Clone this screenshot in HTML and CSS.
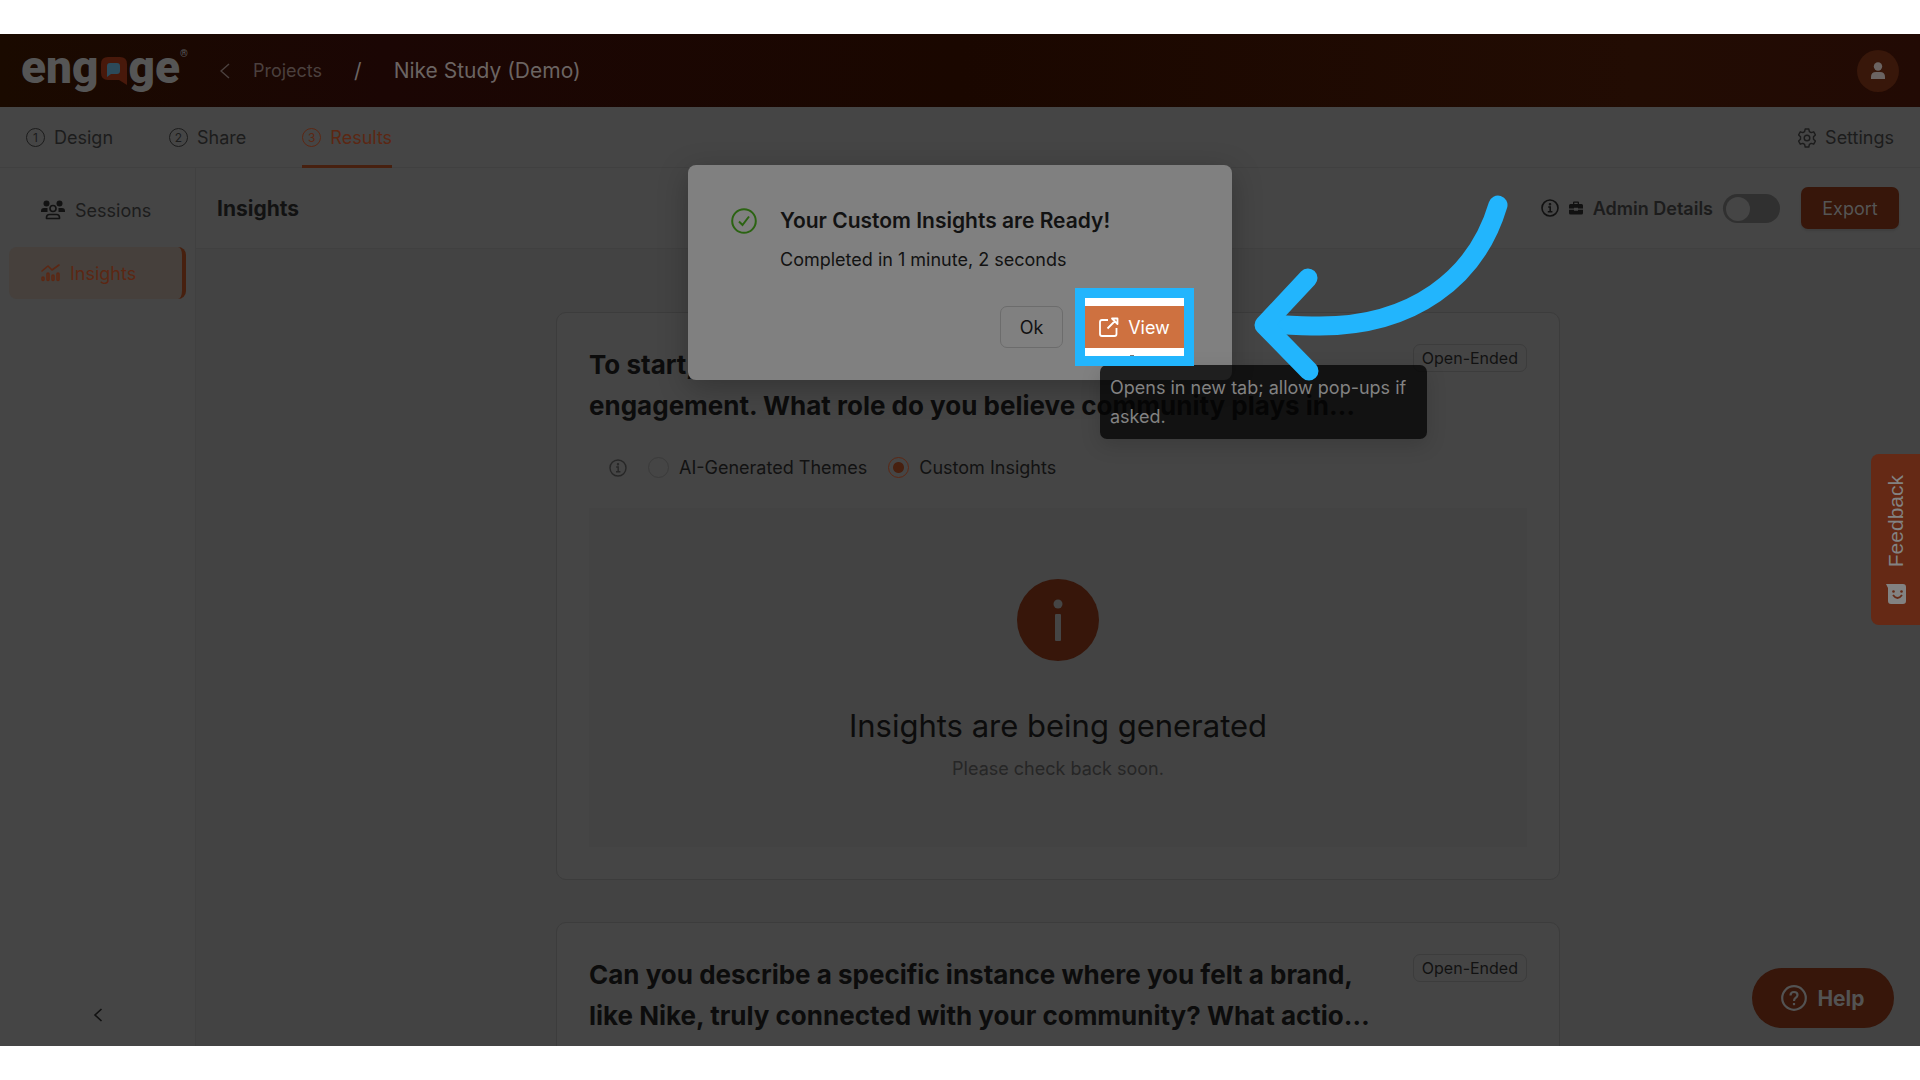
FILE: index.html
```html
<!DOCTYPE html>
<html lang="en">
<head>
  <meta charset="UTF-8">
  <meta name="viewport" content="width=device-width, initial-scale=1">
  <title>Nike Study (Demo) - Insights</title>
  <link rel="stylesheet" href="styles.css">
</head>
<body>

<div class="app">
  <header class="topbar">
    <a href="#" class="logo" aria-label="engage">
      <span>eng</span>
      <svg width="26" height="28" viewBox="0 0 26 28">
        <path d="M7 0H19Q26 0 26 7V28L18 23H7Q0 23 0 16V7Q0 0 7 0Z" fill="#48190b"/>
        <path d="M9 6H16Q19 6 19 9V14Q19 17 16 17H10L6 20V9Q6 6 9 6Z" fill="#2c4a5a"/>
      </svg>
      <span>ge</span>
      <sup>®</sup>
    </a>
    <nav class="breadcrumb">
      <a href="#" class="back" aria-label="Back">
        <svg width="10" height="16" viewBox="0 0 10 16"><path d="M9 1L1 8L9 15" fill="none" stroke="#4b403e" stroke-width="1.5"/></svg>
      </a>
      <a href="#">Projects</a>
      <span class="slash">/</span>
      <span class="current">Nike Study (Demo)</span>
    </nav>
    <button class="avatar" aria-label="Account">
      <svg width="16" height="18" viewBox="0 0 16 18"><circle cx="8" cy="4.5" r="4.2"/><path d="M1 17V15Q1 10 6 10H10Q15 10 15 15V17Z"/></svg>
    </button>
  </header>

  <nav class="tabs">
    <a href="#" class="tab"><span class="num">1</span>Design</a>
    <a href="#" class="tab"><span class="num">2</span>Share</a>
    <a href="#" class="tab active"><span class="num">3</span>Results</a>
    <a href="#" class="tab settings">
      <svg width="18" height="20" viewBox="0 0 18 20" fill="none" stroke="#1c1c1c" stroke-width="1.4" stroke-linejoin="round">
        <path d="M7.2 1H10.8L11.4 3.6L13.2 4.6L15.7 3.8L17.4 6.9L15.5 8.8V11.2L17.4 13.1L15.7 16.2L13.2 15.4L11.4 16.4L10.8 19H7.2L6.6 16.4L4.8 15.4L2.3 16.2L.6 13.1L2.5 11.2V8.8L.6 6.9L2.3 3.8L4.8 4.6L6.6 3.6Z"/>
        <circle cx="9" cy="10" r="2.8"/>
      </svg>
      Settings
    </a>
  </nav>

  <div class="body">
    <aside class="sidebar">
      <a href="#" class="side-link">
        <svg width="24" height="20" viewBox="0 0 24 20" fill="#121212">
          <circle cx="5.5" cy="3.5" r="3"/><circle cx="18.5" cy="3.5" r="3"/>
          <path d="M0 12V11Q0 8 3 8H6.500V12ZM24 12V11Q24 8 21 8H17.500V12Z"/>
          <circle cx="12" cy="8.500" r="3" fill="none" stroke="#121212" stroke-width="1.6"/>
          <path d="M5.500 18.500V17.500Q5.500 14.500 8.500 14.500H15.500Q18.500 14.500 18.500 17.500V18.500Z" fill="none" stroke="#121212" stroke-width="1.6" stroke-linejoin="round"/>
        </svg>
        Sessions
      </a>
      <a href="#" class="side-link active">
        <svg width="19" height="18" viewBox="0 0 19 18" fill="none" stroke="#5c2713" stroke-width="1.6" stroke-linecap="round" stroke-linejoin="round">
          <path d="M1 7L7 2L11 6L18 1"/>
          <rect x="1" y="13" width="2" height="3.500" rx="1"/><rect x="6" y="9" width="2" height="7.500" rx="1"/><rect x="11" y="11" width="2" height="5.500" rx="1"/><rect x="16" y="9" width="2" height="7.500" rx="1"/>
        </svg>
        Insights
      </a>
      <button class="collapse" aria-label="Collapse menu">
        <svg width="10" height="16" viewBox="0 0 10 16"><path d="M8.500 2L2 8L8.500 14" fill="none" stroke="#111" stroke-width="1.6"/></svg>
      </button>
    </aside>

    <main class="main">
      <div class="toolbar">
        <h1>Insights</h1>
        <svg width="18" height="18" viewBox="0 0 18 18" fill="none" stroke="#111" stroke-width="1.6"><circle cx="9" cy="9" r="8"/><path d="M7.200 8H9.200V12.500M6.800 12.700H11.400"/><circle cx="9" cy="5.200" r=".5"/></svg>
        <svg class="briefcase" width="14" height="14" viewBox="0 0 14 14" fill="#111"><path d="M4 3V1.500Q4 .5 5 .5H9Q10 .5 10 1.500V3H12.500Q14 3 14 4.500V7.500H9V6.800H5V7.500H0V4.500Q0 3 1.500 3ZM5.300 3H8.700V1.800H5.300ZM0 8.700H5V9.700H9V8.700H14V12Q14 13.500 12.500 13.500H1.500Q0 13.500 0 12Z" fill-rule="evenodd"/></svg>
        <label for="admin">Admin Details</label>
        <input type="checkbox" id="admin" class="switch">
        <button class="export">Export</button>
      </div>

      <div class="content">
        <section class="card">
          <div class="card-head">
            <h2>To start, let’s discuss brands and community<br>engagement. What role do you believe community plays in…</h2>
            <span class="tag">Open-Ended</span>
          </div>
          <div class="options">
            <svg width="18" height="18" viewBox="0 0 18 18" fill="none" stroke="#272727" stroke-width="1.4"><circle cx="9" cy="9" r="8"/><path d="M7.200 8H9.200V12.500M7 12.700H11.400"/><circle cx="9" cy="5.200" r=".5"/></svg>
            <input type="radio" name="mode" id="themes"><label for="themes">AI-Generated Themes</label>
            <input type="radio" name="mode" id="custom" checked><label for="custom">Custom Insights</label>
          </div>
          <div class="result">
            <svg width="82" height="82" viewBox="0 0 82 82"><circle cx="41" cy="41" r="41" fill="#37160a"/><circle cx="41" cy="25" r="4.500" fill="#454545"/><rect x="38" y="35" width="6" height="27" rx="1" fill="#454545"/></svg>
            <h3>Insights are being generated</h3>
            <p>Please check back soon.</p>
          </div>
        </section>

        <section class="card">
          <div class="card-head">
            <h2>Can you describe a specific instance where you felt a brand,<br>like Nike, truly connected with your community? What actio…</h2>
            <span class="tag">Open-Ended</span>
          </div>
        </section>
      </div>
    </main>
  </div>

  <button class="feedback">
    <svg width="20" height="20" viewBox="0 0 20 20"><path d="M0 0H17Q20 0 20 3V17Q20 20 17 20H5Q2 20 2 17V4Z" fill="#828282"/><path d="M7 11Q11.500 17 16 11" fill="none" stroke="#652915" stroke-width="1.800"/><circle cx="7.500" cy="7.500" r="1.300" fill="#652915"/><circle cx="15.500" cy="7.500" r="1.300" fill="#652915"/></svg>
    <span>Feedback</span>
  </button>
  <button class="help">
    <svg width="26" height="26" viewBox="0 0 26 26" fill="none" stroke="#535353" stroke-width="2.200"><circle cx="13" cy="13" r="11.800"/><path d="M9.500 10.500Q9.500 7 13 7Q16.500 7 16.500 10Q16.500 11.800 14.500 13Q13 14 13 16"/><path d="M13 18V20.200"/></svg>
    Help
  </button>

  <!-- finished notice -->
  <div class="dialog" role="dialog" aria-labelledby="dialog-title">
    <div class="dialog-body">
      <svg width="26" height="26" viewBox="0 0 26 26" fill="none" stroke="#2b6312" stroke-width="2"><circle cx="13" cy="13" r="11.800"/><path d="M8 13.500L11.500 17L18 8.500"/></svg>
      <div>
        <h2 id="dialog-title">Your Custom Insights are Ready!</h2>
        <p>Completed in 1 minute, 2 seconds</p>
      </div>
    </div>
    <div class="dialog-actions">
      <button class="ok">Ok</button>
      <div class="spotlight">
        <button class="view">
          <svg width="20" height="20" viewBox="0 0 20 20" fill="none" stroke="#fff" stroke-width="1.800" stroke-linejoin="round"><path d="M9 3H3Q1 3 1 5V17Q1 19 3 19H15.500Q17.500 19 17.500 17V11"/><path d="M8.500 11.500L16 4M13 1.500H18.500V7Z"/></svg>
          View
        </button>
      </div>
    </div>
    <div class="tooltip" role="tooltip">Opens in new tab; allow pop-ups if asked.</div>
    <svg class="arrow" width="260" height="190" viewBox="0 0 260 190" fill="none" stroke="#22b5fd" stroke-width="19" stroke-linecap="round" stroke-linejoin="round">
      <path d="M244 14C222 88 158 135 66 135C48 135 34 134 16 133"/>
      <path d="M54 87L10 134L55 180"/>
    </svg>
  </div>
</div>

</body>
</html>
```

FILE: styles.css
```css
* {
  box-sizing: border-box;
}
body {
  margin: 0;
  padding: 34px 0;
  background: #fff;
  color: #121212;
  font-family: Inter, "Open Sans", sans-serif;
  font-size: 18px;
}
h1, h2, h3, p {
  margin: 0;
}
a {
  color: inherit;
  text-decoration: none;
}
svg {
  display: block;
  flex-shrink: 0;
}
button, input {
  font: inherit;
  margin: 0;
}
button {
  display: flex;
  align-items: center;
  justify-content: center;
  border: none;
  padding: 0;
  cursor: pointer;
}

.app {
  position: relative;
  display: flex;
  flex-direction: column;
  height: calc(100vh - 68px);
  overflow: hidden;
  background: #434343;
}

/* Header */
.topbar {
  display: flex;
  align-items: center;
  height: 73px;
  padding: 0 21px;
  background: linear-gradient(90deg, #1a0a00, #1b0604 20%, #1a0700 50%, #220c03 85%, #220a04);
  box-shadow: 0 1px 4px rgba(0,0,0,0.3);
}
.logo {
  display: flex;
  align-items: center;
  height: 66px;
  margin-bottom: 7px;
  color: #555;
  font-family: Roboto, sans-serif;
  font-size: 46px;
  font-weight: 900;
  line-height: 60px;
}
.logo svg {
  margin: 8px 2px 0;
}
.logo sup {
  align-self: flex-start;
  font-size: 10px;
  line-height: 40px;
}
.breadcrumb {
  display: flex;
  align-items: center;
  margin-left: 32px;
  color: #4b403e;
}
.back {
  margin-right: 23px;
}
.slash {
  margin: 0 32px;
  color: #6b6462;
  font-size: 21px;
}
.current {
  color: #6b6462;
  font-size: 21px;
}
.avatar {
  width: 42px;
  height: 42px;
  margin-left: auto;
  border-radius: 50%;
  background: #38170a;
  fill: #6b6462;
}

/* Tabs */
.tabs {
  display: flex;
  gap: 56px;
  height: 61px;
  padding: 0 26px;
  background: #454545;
  border-bottom: 1px solid #404040;
}
.tab {
  display: flex;
  align-items: center;
  gap: 9px;
  height: 61px;
  padding-top: 3px;
  border-bottom: 3px solid transparent;
  color: #1c1c1c;
}
.tab.active {
  color: #5c2713;
  border-color: #47200f;
}
.num {
  width: 19px;
  height: 19px;
  border: 1px solid;
  border-radius: 50%;
  font-size: 12px;
  line-height: 17px;
  text-align: center;
}
.settings {
  margin-left: auto;
}

.body {
  display: flex;
  flex: 1;
  min-height: 0;
}

/* Sidebar */
.sidebar {
  display: flex;
  flex-direction: column;
  gap: 11px;
  width: 196px;
  padding: 16px 9px;
  background: #454545;
  border-right: 1px solid #404040;
}
.side-link {
  display: flex;
  align-items: center;
  gap: 10px;
  height: 52px;
  padding-left: 32px;
  border-radius: 8px;
  color: #1c1c1c;
}
.side-link.active {
  background: #46403c;
  border-right: 4px solid #47200f;
  color: #5c2713;
}
.collapse {
  width: 30px;
  height: 30px;
  margin: auto auto 0;
  background: none;
}

/* Main */
.main {
  flex: 1;
  display: flex;
  flex-direction: column;
  min-width: 0;
}
.toolbar {
  display: flex;
  align-items: center;
  gap: 10px;
  height: 81px;
  flex-shrink: 0;
  padding: 0 21px;
  background: #454545;
  border-bottom: 1px solid #404040;
}
.toolbar h1 {
  margin-right: auto;
  font-size: 21px;
  font-weight: 700;
}
.toolbar label {
  color: #1c1c1c;
  font-weight: 600;
}
.switch {
  appearance: none;
  width: 57px;
  height: 29px;
  padding: 3px;
  border-radius: 15px;
  background: #303030;
}
.switch::before {
  content: "";
  display: block;
  width: 24px;
  height: 24px;
  border-radius: 50%;
  background: #454545;
}
.export {
  width: 98px;
  height: 42px;
  margin-left: 11px;
  border-radius: 7px;
  background: #37160a;
  color: #555;
  box-shadow: 0 2px 2px rgba(0,0,0,0.1);
}
.content {
  display: flex;
  flex-direction: column;
  gap: 42px;
  width: 100%;
  max-width: 1004px;
  margin: 63px auto 0;
}
.card {
  padding: 31px 32px 32px;
  background: #454545;
  border: 1px solid #3c3c3c;
  border-radius: 10px;
}
.card-head {
  display: flex;
  justify-content: space-between;
  align-items: flex-start;
}
.card h2 {
  color: #0c0c0c;
  font-size: 26px;
  font-weight: 700;
  line-height: 41px;
  white-space: nowrap;
}
.tag {
  padding: 0 8px;
  border: 1px solid #3c3c3c;
  border-radius: 7px;
  font-size: 16px;
  line-height: 26px;
}
.options {
  display: flex;
  align-items: center;
  height: 21px;
  margin: 31px 0 30px;
  padding-left: 20px;
}
.options input {
  appearance: none;
  width: 21px;
  height: 21px;
  margin: 0 10px 0 21px;
  border: 1px solid #3a3a3a;
  border-radius: 50%;
}
.options input:checked {
  border-color: #5c2713;
  background: radial-gradient(circle, #47200f 5px, transparent 6px);
}
.result {
  display: flex;
  flex-direction: column;
  align-items: center;
  height: 339px;
  padding-top: 71px;
  background: #434343;
}
.result h3 {
  margin-top: 43px;
  color: #0c0c0c;
  font-size: 31px;
  font-weight: 400;
  line-height: 44px;
}
.result p {
  margin-top: 7px;
  color: #262626;
  line-height: 28px;
}

/* Floating buttons */
.feedback {
  position: absolute;
  right: 0;
  top: 420px;
  flex-direction: column-reverse;
  gap: 16px;
  width: 49px;
  height: 171px;
  border-radius: 8px 0 0 8px;
  background: #652915;
  color: #828282;
  font-family: "Liberation Sans", sans-serif;
  font-size: 21px;
}
.feedback span {
  writing-mode: vertical-rl;
  rotate: 180deg;
}
.help {
  position: absolute;
  right: 26px;
  bottom: 18px;
  gap: 10px;
  width: 142px;
  height: 60px;
  border-radius: 30px;
  background: #37160a;
  color: #535353;
  font-size: 21px;
  font-weight: 700;
}

/* Dialog */
.dialog {
  position: absolute;
  top: 131px;
  left: calc(50% - 272px);
  width: 544px;
  padding: 40px 38px 14px 43px;
  border-radius: 8px;
  background: #808080;
  box-shadow: 0 8px 30px rgba(0,0,0,0.25);
}
.dialog-body {
  display: flex;
  gap: 23px;
}
.dialog-body svg {
  margin-top: 3px;
}
.dialog h2 {
  font-size: 21px;
  font-weight: 600;
  line-height: 32px;
}
.dialog p {
  margin-top: 9px;
  line-height: 28px;
}
.dialog-actions {
  display: flex;
  align-items: center;
  justify-content: flex-end;
  gap: 12px;
  margin-top: 14px;
}
.ok {
  width: 63px;
  height: 42px;
  border: 1px solid #6c6c6c;
  border-radius: 7px;
  background: #808080;
  color: #121212;
}
.spotlight {
  position: relative;
  z-index: 2;
  padding: 8px 0;
  border: 10px solid #22b5fd;
  background: #fff;
}
/* tip of the tooltip pointer */
.spotlight::after {
  content: "";
  position: absolute;
  left: 45px;
  bottom: 0;
  width: 4px;
  height: 1px;
  background: #777;
}
.view {
  gap: 9px;
  width: 99px;
  height: 42px;
  background: #ce7140;
  color: #fff;
}
.tooltip {
  position: absolute;
  top: 200px;
  left: 412px;
  width: 327px;
  padding: 8px 10px;
  border-radius: 7px;
  background: rgba(4,4,4,0.78);
  color: #828282;
  line-height: 29px;
  box-shadow: 0 6px 20px rgba(0,0,0,0.15);
}
.arrow {
  position: absolute;
  top: 26px;
  left: 566px;
  z-index: 3;
}
```
